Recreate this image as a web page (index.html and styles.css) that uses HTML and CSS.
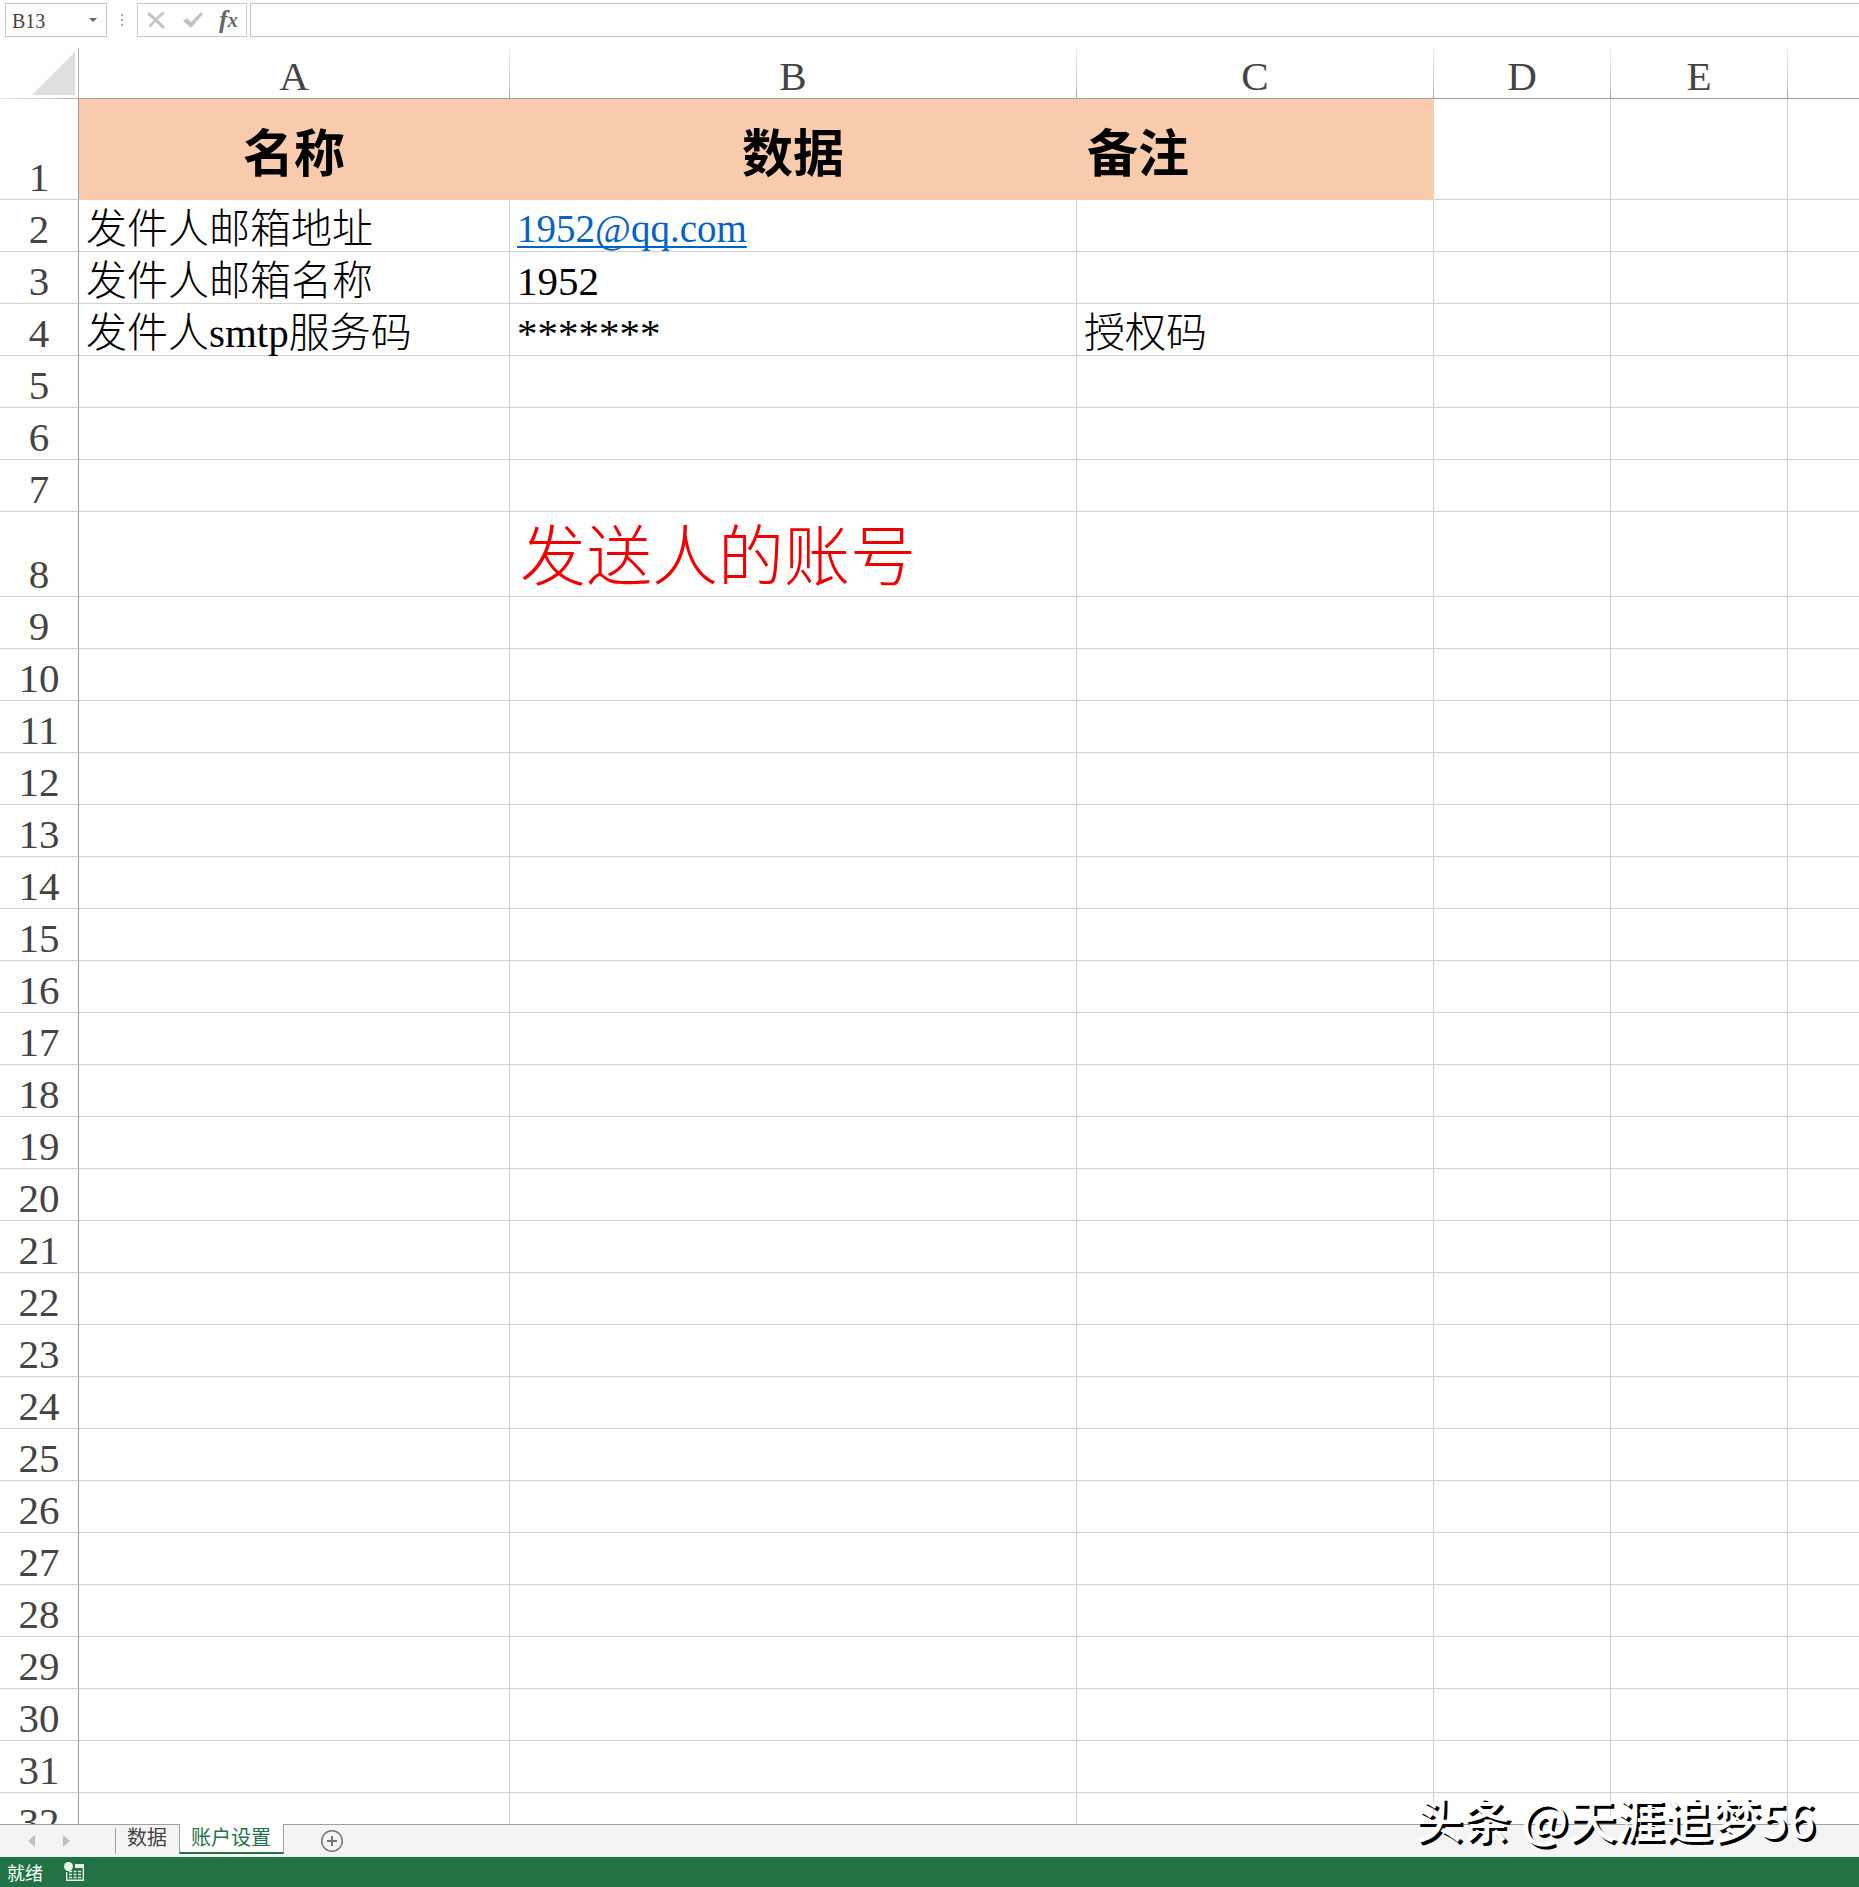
FILE: index.html
```
<!doctype html>
<html lang="zh-CN">

<head>
    <meta charset="UTF-8">
    <meta name="viewport" content="width=device-width, initial-scale=1.0">

    <link rel="stylesheet" href="styles.css">
    <title>账户设置</title>
</head>

<body>
    <div class="formula-bar">
        <div class="name-box">
            <input type="text" class="name-input" value="B13" aria-label="名称框">
            <button class="name-drop" aria-label="展开">
                <svg width="8" height="4" viewBox="0 0 8 4"><path d="M0 0h8L4 4z" fill="#666"/></svg>
            </button>
        </div>
        <svg class="grip" width="2" height="12" viewBox="0 0 2 12"><path d="M0 0h2v2H0zM0 5h2v2H0zM0 10h2v2H0z" fill="#aaa"/></svg>
        <div class="formula-tools">
            <button aria-label="取消">
                <svg width="20" height="20" viewBox="0 0 20 20" fill="none" stroke="#c3c3c3" stroke-linecap="round"><path d="M3 4C8 8 12 12 17 17" stroke-width="3"/><path d="M17 3C12 7 8 11 4 16" stroke-width="2.5"/></svg>
            </button>
            <button aria-label="输入">
                <svg width="20" height="20" viewBox="0 0 20 20"><path d="M0 11l4-3 4 4L18 2l2 2L8 18z" fill="#c3c3c3"/></svg>
            </button>
            <button class="fx" aria-label="插入函数"><i>f</i><i class="fx-x">x</i></button>
        </div>
        <input type="text" class="formula-input" aria-label="编辑栏">
    </div>

    <div class="sheet">
        <table class="grid">
            <colgroup>
                <col class="col-num">
                <col class="col-a">
                <col class="col-b">
                <col class="col-c">
                <col class="col-d">
                <col class="col-e">
                <col>
            </colgroup>
            <thead>
                <tr>
                    <th class="corner"><svg width="43" height="43" viewBox="0 0 43 43"><path d="M43 0v43H0z" fill="#dfdfdf"/></svg></th>
                    <th>A</th>
                    <th>B</th>
                    <th>C</th>
                    <th>D</th>
                    <th>E</th>
                    <th></th>
                </tr>
            </thead>
            <tbody id="rows">
                <tr class="title-row">
                    <th>1</th>
                    <td class="title center">名称</td>
                    <td class="title center">数据</td>
                    <td class="title">备注</td>
                    <td></td>
                    <td></td>
                    <td></td>
                </tr>
                <tr>
                    <th>2</th>
                    <td>发件人邮箱地址</td>
                    <td><a href="mailto:1952@qq.com">1952@qq.com</a></td>
                    <td></td>
                    <td></td>
                    <td></td>
                    <td></td>
                </tr>
                <tr>
                    <th>3</th>
                    <td>发件人邮箱名称</td>
                    <td>1952</td>
                    <td></td>
                    <td></td>
                    <td></td>
                    <td></td>
                </tr>
                <tr>
                    <th>4</th>
                    <td>发件人smtp服务码</td>
                    <td>*******</td>
                    <td>授权码</td>
                    <td></td>
                    <td></td>
                    <td></td>
                </tr>
            </tbody>
        </table>
    </div>

    <div class="tab-bar">
        <div class="tab-nav">
            <button aria-label="上一个"><svg width="7" height="12" viewBox="0 0 7 12"><path d="M7 0v12L0 6z" fill="#c0c0c0"/></svg></button>
            <button aria-label="下一个"><svg width="7" height="12" viewBox="0 0 7 12"><path d="M0 0v12l7-6z" fill="#c0c0c0"/></svg></button>
        </div>
        <button class="tab">数据</button>
        <button class="tab active">账户设置</button>
        <button class="tab-add" aria-label="新工作表">
            <svg width="24" height="24" viewBox="0 0 24 24" fill="none" stroke="#777"><circle cx="12" cy="12" r="10.3" stroke-width="1.5"/><path d="M12 7v10M7 12h10" stroke-width="2"/></svg>
        </button>
    </div>

    <div class="status-bar">
        <span>就绪</span>
        <svg width="21" height="20" viewBox="0 0 21 20">
            <path d="M11 2h9v4h-9z" fill="#e6f3eb"/>
            <path d="M2.7 10v8.3h16.6V5" fill="none" stroke="#e6f3eb" stroke-width="1.4"/>
            <path d="M5 9.5h3m1.500 0h3m1.500 0h3M5 12.500h3m1.500 0h3m1.500 0h3M5 15.500h3m1.500 0h3m1.500 0h3" stroke="#e6f3eb" stroke-width="1.300"/>
            <circle cx="4.500" cy="4.500" r="4.500" fill="#e6f3eb"/>
        </svg>
    </div>

    <div class="watermark">头条 @天涯追梦56</div>

    <script>
        const rows = document.getElementById('rows');
        const notes = { 8: '发送人的账号' };

        for (let i = 5; i <= 32; i++) {
            const tr = document.createElement('tr');
            const note = notes[i] || '';
            if (note) tr.className = 'note-row';
            tr.innerHTML = `<th>${i}</th><td></td><td>${note}</td><td></td><td></td><td></td><td></td>`;
            rows.appendChild(tr);
        }
    </script>
</body>

</html>
```
FILE: styles.css
```
* {
    box-sizing: border-box;
}

body {
    margin: 0;
    height: 100vh;
    display: flex;
    flex-direction: column;
    overflow: hidden;
    background: #fff;
    font-family: "Liberation Serif", "Noto Sans CJK SC", serif;
    color: #000;
}

button {
    border: 0;
    padding: 0;
    background: none;
    display: flex;
    align-items: center;
    justify-content: center;
    font-family: inherit;
    cursor: pointer;
}

/* formula bar */
.formula-bar {
    display: flex;
    align-items: center;
    flex: none;
    height: 48px;
    padding: 3px 0 11px 5px;
}

.name-box,
.formula-tools {
    display: flex;
    align-items: center;
    height: 34px;
    border: 1px solid #c6c6c6;
}

.name-box {
    width: 102px;
}

.name-input {
    flex: 1;
    min-width: 0;
    padding: 3px 0 0 6px;
    border: 0;
    outline: 0;
    background: none;
    font-family: inherit;
    font-size: 20px;
    color: #444;
}

.name-drop {
    width: 26px;
    height: 100%;
}

.grip {
    margin: 0 14px;
}

.formula-tools {
    width: 110px;
    justify-content: space-around;
    margin-right: 3px;
}

.fx {
    font-size: 26px;
    font-weight: bold;
    line-height: 28px;
    color: #666;
}

.fx-x {
    font-size: 20px;
}

.formula-input {
    flex: 1;
    height: 34px;
    border: 1px solid #c6c6c6;
    border-right: 0;
    outline: 0;
}

/* cells */
.sheet {
    flex: 1;
    min-height: 0;
    overflow: hidden;
}

.grid {
    width: 100%;
    table-layout: fixed;
    border-collapse: separate;
    border-spacing: 0;
    font-size: 41px;
    line-height: 44px;
}

.col-num { width: 79px; }
.col-a { width: 431px; }
.col-b { width: 567px; }
.col-c { width: 357px; }
.col-d,
.col-e { width: 177px; }

.grid th,
.grid td {
    height: 52px;
    padding: 0 0 0 7px;
    border-right: 1px solid #d0d0d0;
    border-bottom: 1px solid #d0d0d0;
    text-align: left;
    vertical-align: bottom;
    font-weight: 300;
    white-space: nowrap;
}

.grid tr > :last-child {
    border-right: 0;
}

.grid th {
    padding: 0;
    text-align: center;
    font-weight: normal;
    color: #444;
}

.grid thead th {
    height: 51px;
    border-bottom-color: #9c9c9c;
    border-image: linear-gradient(#f0f0f0, #c4c4c4 80%, #9c9c9c) 1;
}

.grid thead .corner {
    padding: 0 3px 3px 0;
    text-align: right;
    border-image: linear-gradient(to right, #ececec, #b0b0b0) 1;
}

.corner svg {
    display: block;
    margin-left: auto;
}

.grid tbody th {
    border-right-color: #9c9c9c;
}

.grid .title-row > * {
    height: 101px;
}

.grid .title {
    background: #f8cbad;
    border-color: #f8cbad;
    padding: 12px 0 0 10px;
    vertical-align: middle;
    font-size: 51px;
    font-weight: bold;
}

.grid .center {
    padding-left: 0;
    text-align: center;
}

.grid .note-row > * {
    height: 85px;
}

.grid .note-row td {
    padding: 8px 0 0 10px;
    vertical-align: middle;
    font-size: 66px;
    line-height: 76px;
    color: #f00000;
}

.grid a {
    font-size: 39px;
    color: #0563c1;
    text-decoration-thickness: 2px;
    text-underline-offset: 4px;
    text-decoration-skip-ink: none;
}

/* sheet tabs */
.tab-bar {
    display: flex;
    align-items: flex-start;
    flex: none;
    height: 33px;
    background: #f4f4f4;
    box-shadow: inset 0 1px #a0a0a0;
    font-family: "Noto Sans CJK SC", sans-serif;
}

.tab-nav {
    display: flex;
    gap: 28px;
    width: 116px;
    height: 26px;
    margin-top: 4px;
    padding-left: 28px;
    border-right: 1px solid #a0a0a0;
}

.tab {
    height: 30px;
    padding: 0 12px 4px 11px;
    font-size: 20px;
    line-height: 26px;
    color: #444;
}

.tab.active {
    background: #fff;
    border: 1px solid #a0a0a0;
    border-top: 0;
    border-bottom: 2px solid #217346;
    padding-bottom: 2px;
    color: #217346;
}

.tab-add {
    margin: 5px 0 0 36px;
}

/* status bar */
.status-bar {
    display: flex;
    align-items: center;
    gap: 21px;
    flex: none;
    height: 30px;
    padding-left: 7px;
    background: #217346;
    font-family: "Noto Sans CJK SC", sans-serif;
    font-size: 18px;
    line-height: 28px;
    color: #fff;
}

.watermark {
    position: absolute;
    right: 44px;
    bottom: 40px;
    font-family: "Noto Sans CJK SC", sans-serif;
    font-size: 48px;
    font-weight: 500;
    line-height: 60px;
    color: #fff;
    text-shadow: 3px 3px 0 #000;
}
```
